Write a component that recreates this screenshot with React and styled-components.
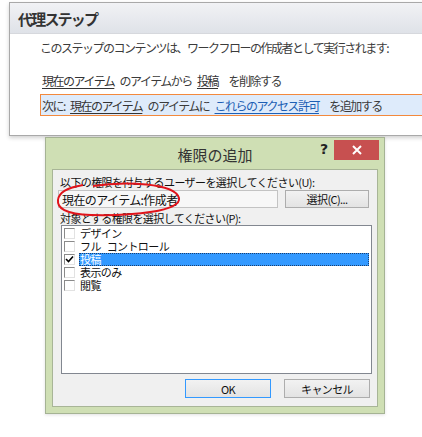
import React from "react";
import styled, { createGlobalStyle } from "styled-components";

const GlobalStyle = createGlobalStyle`
  html, body {
    margin: 0;
    padding: 0;
    background: #ffffff;
    overflow: hidden;
  }
  body {
    font-family: "Noto Sans CJK JP", "Noto Sans", sans-serif;
    color: #333;
  }
`;

const Page = styled.div`
  width: 422px;
  height: 437px;
  padding-top: 2px;
  box-sizing: border-box;
  overflow: hidden;
`;

/* ---------- top step panel ---------- */

const StepPanel = styled.div`
  margin-left: 9px;
  width: 430px;
  height: 134px;
  box-sizing: border-box;
  border: 1px solid #a9a9a9;
  background: #fff;
  box-shadow: 0 2px 4px rgba(0, 0, 0, 0.18);
`;

const StepHeader = styled.div`
  height: 30px;
  display: flex;
  align-items: center;
  padding-left: 8px;
  background: linear-gradient(#f1f2f5, #dfe2e8);
  border-bottom: 1px solid #d6d8dd;
  font-size: 15px;
  font-weight: 700;
  letter-spacing: -1.8px;
  color: #333;
`;

const StepBody = styled.div`
  display: flex;
  flex-direction: column;
  padding-left: 30px;
  padding-top: 6px;
  font-size: 12px;
  letter-spacing: -1.5px;
  word-spacing: 4px;
  color: #3b3b3b;
`;

const Line = styled.div`
  height: 16px;
  line-height: 16px;
  white-space: pre;
  padding-left: ${(p) => p.$indent || 0}px;
  margin-bottom: ${(p) => p.$gap || 0}px;
`;

const NextBox = styled.div`
  height: 22px;
  box-sizing: border-box;
  display: flex;
  align-items: center;
  padding-left: 1px;
  border: 1px solid #f3893d;
  border-right: none;
  background: #deebfb;
  white-space: pre;
`;

const Link = styled.span`
  text-decoration: underline;
  text-underline-offset: 2px;
  color: ${(p) => (p.$blue ? "#1d5fb4" : "#333")};
`;

/* ---------- dialog ---------- */

const Dialog = styled.div`
  position: relative;
  margin-top: 1px;
  margin-left: 45px;
  width: 340px;
  height: 277px;
  box-sizing: border-box;
  border: 1px solid #a5b394;
  background: #cfdfb4;
  display: flex;
  flex-direction: column;
  box-shadow: 0 1px 3px rgba(0, 0, 0, 0.12);
`;

const TitleBar = styled.div`
  height: 31px;
  display: flex;
  align-items: center;
  justify-content: center;
  font-size: 15px;
  color: #333;
  padding-top: 2px;
  box-sizing: border-box;
`;

const HelpMark = styled.span`
  position: absolute;
  top: 3px;
  right: 56px;
  font-family: "DejaVu Sans", sans-serif;
  font-size: 14px;
  font-weight: 700;
  color: #222;
`;

const CloseButton = styled.div`
  position: absolute;
  top: 2px;
  right: 5px;
  width: 45px;
  height: 20px;
  background: #c75050;
  display: flex;
  align-items: center;
  justify-content: center;
`;

const Inner = styled.div`
  position: relative;
  flex: 1;
  margin: 0 6px 6px 6px;
  border: 1px solid #a8b597;
  background: #f0f0f0;
  display: flex;
  flex-direction: column;
  padding: 5px 6px 0 5px;
  font-size: 11px;
  letter-spacing: -0.6px;
  color: #111;
`;

const Label = styled.div`
  height: 14px;
  line-height: 14px;
  padding-left: 2px;
  white-space: nowrap;
  margin-top: ${(p) => p.$top || 0}px;
`;

const Row = styled.div`
  display: flex;
  align-items: center;
  gap: ${(p) => p.$gap || 0}px;
  justify-content: ${(p) => (p.$end ? "flex-end" : "flex-start")};
  margin: ${(p) => p.$margin || "0"};
`;

const TextBox = styled.div`
  width: 220px;
  height: 18px;
  box-sizing: border-box;
  border: 1px solid #c3c3c3;
  background: #f7f7f7;
  display: flex;
  align-items: center;
  padding-left: 3px;
  font-size: 12px;
  letter-spacing: -0.6px;
`;

const Button = styled.div`
  width: ${(p) => p.$w}px;
  height: ${(p) => p.$h}px;
  box-sizing: border-box;
  border: 1px solid ${(p) => (p.$focus ? "#3399ff" : "#adadad")};
  background: linear-gradient(#f2f2f2, #e3e3e3);
  display: flex;
  align-items: center;
  justify-content: center;
  font-size: 11px;
  color: #111;
`;

const ListBox = styled.div`
  width: 311px;
  height: 149px;
  box-sizing: border-box;
  margin-left: 3px;
  border: 1px solid #828790;
  background: #fff;
  padding: 1px 1px 0 2px;
  display: flex;
  flex-direction: column;
`;

const Item = styled.div`
  height: 13px;
  line-height: 13px;
  display: flex;
  align-items: center;
  gap: 4px;
`;

const Check = styled.div`
  width: 11px;
  height: 11px;
  box-sizing: border-box;
  border-top: 1px solid #8a8a8a;
  border-left: 1px solid #8a8a8a;
  border-right: 1px solid #e2e2e2;
  border-bottom: 1px solid #e2e2e2;
  background: #fff;
  display: flex;
  align-items: center;
  justify-content: center;
`;

const ItemText = styled.div`
  flex: 1;
  height: 13px;
  line-height: 13px;
  box-sizing: border-box;
  padding-left: 1px;
  white-space: pre;
  word-spacing: 4px;
  margin-right: 1px;
  ${(p) =>
    p.$selected &&
    `
    background: #3399ff;
    color: #fff;
    outline: 1px dotted #1a3f70;
    outline-offset: -1px;
  `}
`;

const Circle = styled.svg`
  position: absolute;
  left: 0;
  top: 0;
  pointer-events: none;
`;

const items = ["デザイン", "フル コントロール", "投稿", "表示のみ", "閲覧"];

export default function App() {
  return (
    <Page>
      <GlobalStyle />
      <StepPanel>
        <StepHeader>代理ステップ</StepHeader>
        <StepBody>
          <Line $gap={17}>このステップのコンテンツは、ワークフローの作成者として実行されます:</Line>
          <Line $indent={2} $gap={5}>
            <Link>現在のアイテム</Link>{" のアイテムから "}<Link>投稿</Link>{"  を削除する"}
          </Line>
          <NextBox>
            {"次に: "}<Link>現在のアイテム</Link>{" のアイテムに "}<Link $blue>これらのアクセス許可</Link>{"  を追加する"}
          </NextBox>
        </StepBody>
      </StepPanel>

      <Dialog>
        <TitleBar>権限の追加</TitleBar>
        <HelpMark>?</HelpMark>
        <CloseButton>
          <svg width="10" height="10" viewBox="0 0 10 10">
            <path d="M1 1 L9 9 M9 1 L1 9" stroke="#fff" strokeWidth="2" />
          </svg>
        </CloseButton>
        <Inner>
          <Label>以下の権限を付与するユーザーを選択してください(U):</Label>
          <Row $gap={7} $margin="1px 0 0 0">
            <TextBox>現在のアイテム:作成者</TextBox>
            <Button $w={84} $h={18}>選択(C)...</Button>
          </Row>
          <Label $top={3}>対象とする権限を選択してください(P):</Label>
          <ListBox>
            {items.map((t) => (
              <Item key={t}>
                <Check>
                  {t === "投稿" && (
                    <svg width="9" height="9" viewBox="0 0 9 9">
                      <path d="M1 4 L3.5 6.5 L8 1.5" stroke="#000" strokeWidth="1.6" fill="none" />
                    </svg>
                  )}
                </Check>
                <ItemText $selected={t === "投稿"}>{t}</ItemText>
              </Item>
            ))}
          </ListBox>
          <Row $end $gap={13} $margin="5px 1px 0 0">
            <Button $w={86} $h={19} $focus>OK</Button>
            <Button $w={86} $h={19}>キャンセル</Button>
          </Row>
          <Circle width="326" height="238" viewBox="0 0 326 238">
            <path
              d="M40 16 C72 11, 122 13, 126 28 C129 41, 80 46, 38 45 C12 44, 4 38, 5 30 C6 22, 14 18, 30 15"
              stroke="#e0141b"
              strokeWidth="2"
              fill="none"
            />
          </Circle>
        </Inner>
      </Dialog>
    </Page>
  );
}
